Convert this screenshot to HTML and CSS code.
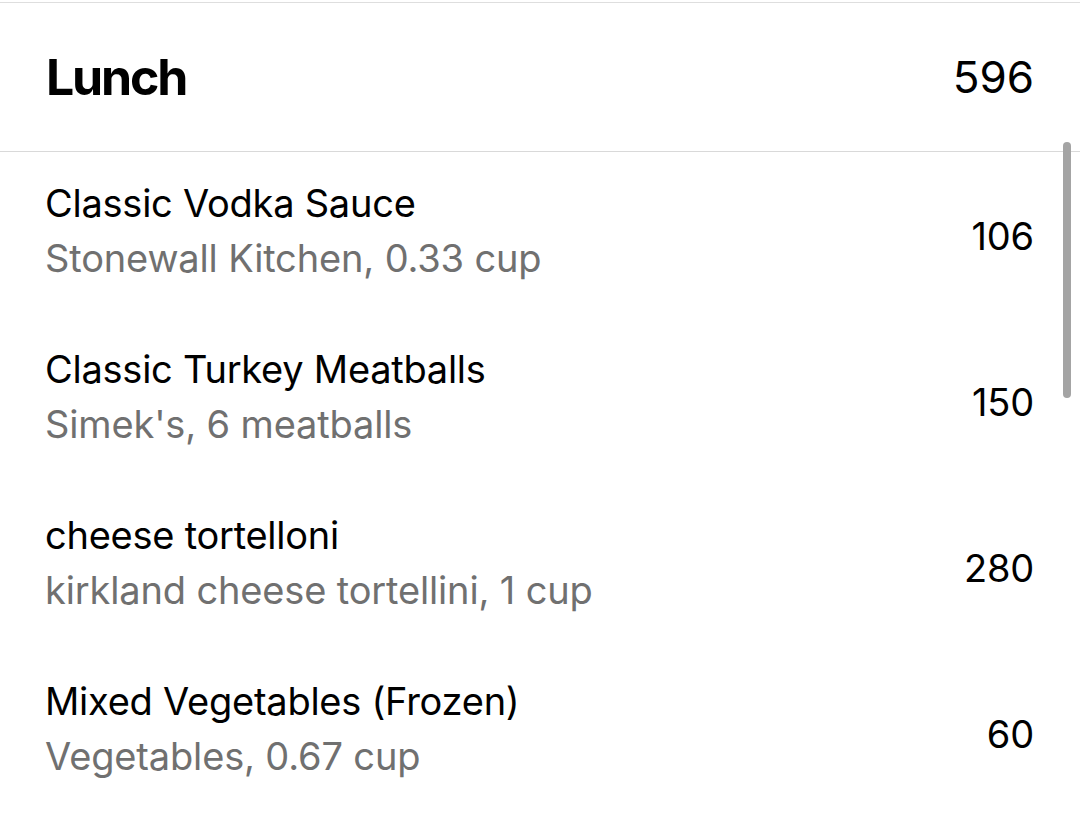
FILE: index.html
```html
<!DOCTYPE html>
<html lang="en">
<head>
<meta charset="utf-8">
<title>Lunch</title>
<link rel="stylesheet" href="styles.css">
</head>
<body>
<div class="screen">
  <header class="meal-header">
    <h1 class="meal-title">Lunch</h1>
    <span class="meal-total">596</span>
  </header>
  <ul class="food-list">
    <li class="food-row">
      <div class="food-text">
        <div class="food-name">Classic Vodka Sauce</div>
        <div class="food-detail">Stonewall Kitchen, 0.33 cup</div>
      </div>
      <span class="food-cal">106</span>
    </li>
    <li class="food-row">
      <div class="food-text">
        <div class="food-name">Classic Turkey Meatballs</div>
        <div class="food-detail">Simek's, 6 meatballs</div>
      </div>
      <span class="food-cal">150</span>
    </li>
    <li class="food-row">
      <div class="food-text">
        <div class="food-name">cheese tortelloni</div>
        <div class="food-detail">kirkland cheese tortellini, 1 cup</div>
      </div>
      <span class="food-cal">280</span>
    </li>
    <li class="food-row">
      <div class="food-text">
        <div class="food-name">Mixed Vegetables (Frozen)</div>
        <div class="food-detail">Vegetables, 0.67 cup</div>
      </div>
      <span class="food-cal">60</span>
    </li>
  </ul>
  <div class="scrollbar"></div>
</div>
</body>
</html>
```

FILE: styles.css
```css
html, body {
  margin: 0;
  padding: 0;
  background: #ffffff;
}
body {
  font-family: Inter, "Liberation Sans", Arial, sans-serif;
  color: #000000;
}
.screen {
  position: relative;
  width: 1080px;
  height: 819px;
  overflow: hidden;
  padding-top: 2px;
  box-sizing: border-box;
}
.meal-header {
  display: flex;
  align-items: center;
  justify-content: space-between;
  height: 150px;
  padding: 0 46px 0 46px;
  border-top: 1px solid #dedede;
  border-bottom: 1px solid #d9d9d9;
  box-sizing: border-box;
}
.meal-title {
  margin: 0;
  font-size: 50px;
  font-weight: 700;
  letter-spacing: -2.2px;
  line-height: 60px;
}
.meal-total {
  font-size: 44px;
  font-weight: 400;
  letter-spacing: 0;
  line-height: 60px;
}
.food-list {
  list-style: none;
  margin: 0;
  padding: 0;
}
.food-row {
  display: flex;
  align-items: center;
  justify-content: space-between;
  height: 166px;
  padding: 25px 46px 33px 45px;
  box-sizing: border-box;
}
.food-text {
  display: flex;
  flex-direction: column;
}
.food-name,
.food-detail,
.food-cal {
  font-size: 38px;
  white-space: nowrap;
}
.food-name {
  color: #000000;
  line-height: 53px;
  letter-spacing: -0.25px;
}
.food-detail {
  color: #707070;
  line-height: 56px;
  letter-spacing: -0.15px;
}
.food-cal {
  color: #000000;
  line-height: 53px;
  letter-spacing: -0.2px;
  margin-top: 10px;
}
.scrollbar {
  position: absolute;
  left: 1063px;
  top: 142px;
  width: 8px;
  height: 256px;
  border-radius: 4px;
  background: #a4a4a4;
}
```
